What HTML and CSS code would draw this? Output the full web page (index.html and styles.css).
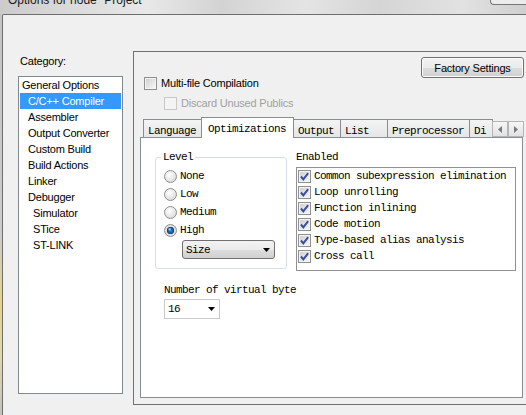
FILE: index.html
```html
<!DOCTYPE html>
<html>
<head>
<meta charset="utf-8">
<title>Options for node "Project"</title>
<link rel="stylesheet" href="styles.css">
</head>
<body>
<div class="app">
  <div class="titlebar">
    <span class="title">Options for node "Project"</span>
    <span class="caption-btn"></span>
  </div>
  <div class="frame">
    <div class="frame-edge"></div>
    <div class="window">
      <div class="main">
        <aside class="sidebar">
          <div class="cat-label">Category:</div>
          <ul class="listbox">
            <li>General Options</li>
            <li class="l1 selected">C/C++ Compiler</li>
            <li class="l1">Assembler</li>
            <li class="l1">Output Converter</li>
            <li class="l1">Custom Build</li>
            <li class="l1">Build Actions</li>
            <li class="l1">Linker</li>
            <li class="l1">Debugger</li>
            <li class="l2">Simulator</li>
            <li class="l2">STice</li>
            <li class="l2">ST-LINK</li>
          </ul>
        </aside>
        <section class="panel">
          <div class="panel-top">
            <div class="checks">
              <div class="check-row"><span class="cb"></span><span>Multi-file Compilation</span></div>
              <div class="check-row sub disabled"><span class="cb"></span><span>Discard Unused Publics</span></div>
            </div>
            <button class="factory">Factory Settings</button>
          </div>
          <div class="tabs mono">
            <div class="tabstrip">
              <div class="tab">Language</div>
              <div class="tab active">Optimizations</div>
              <div class="tab">Output</div>
              <div class="tab">List</div>
              <div class="tab">Preprocessor</div>
              <div class="tab tab-clip">Di</div>
              <div class="tab-scroll">
                <span class="scroll-btn"><svg width="4" height="7" viewBox="0 0 4 7"><path d="M4 0V7L0 3.5Z" fill="#7a7a7a"/></svg></span>
                <span class="scroll-btn"><svg width="4" height="7" viewBox="0 0 4 7"><path d="M0 0V7L4 3.5Z" fill="#7a7a7a"/></svg></span>
              </div>
            </div>
            <div class="page">
              <div class="page-row">
                <fieldset class="level">
                  <legend>Level</legend>
                  <div class="radio-row"><span class="radio"></span><span>None</span></div>
                  <div class="radio-row"><span class="radio"></span><span>Low</span></div>
                  <div class="radio-row"><span class="radio"></span><span>Medium</span></div>
                  <div class="radio-row"><span class="radio on"></span><span>High</span></div>
                  <div class="combo combo-size"><span>Size</span><svg width="7" height="4" viewBox="0 0 7 4"><path d="M0 0H7L3.5 4Z" fill="#000"/></svg></div>
                </fieldset>
                <div class="enabled">
                  <div class="enabled-label">Enabled</div>
                  <div class="checklist">
                    <div class="check-item"><span class="cb"><svg width="11" height="11" viewBox="0 0 11 11"><path d="M2 5.5L4.3 8.3L9.2 2.2" fill="none" stroke="#3a4f9c" stroke-width="2"/></svg></span><span>Common subexpression elimination</span></div>
                    <div class="check-item"><span class="cb"><svg width="11" height="11" viewBox="0 0 11 11"><path d="M2 5.5L4.3 8.3L9.2 2.2" fill="none" stroke="#3a4f9c" stroke-width="2"/></svg></span><span>Loop unrolling</span></div>
                    <div class="check-item"><span class="cb"><svg width="11" height="11" viewBox="0 0 11 11"><path d="M2 5.5L4.3 8.3L9.2 2.2" fill="none" stroke="#3a4f9c" stroke-width="2"/></svg></span><span>Function inlining</span></div>
                    <div class="check-item"><span class="cb"><svg width="11" height="11" viewBox="0 0 11 11"><path d="M2 5.5L4.3 8.3L9.2 2.2" fill="none" stroke="#3a4f9c" stroke-width="2"/></svg></span><span>Code motion</span></div>
                    <div class="check-item"><span class="cb"><svg width="11" height="11" viewBox="0 0 11 11"><path d="M2 5.5L4.3 8.3L9.2 2.2" fill="none" stroke="#3a4f9c" stroke-width="2"/></svg></span><span>Type-based alias analysis</span></div>
                    <div class="check-item"><span class="cb"><svg width="11" height="11" viewBox="0 0 11 11"><path d="M2 5.5L4.3 8.3L9.2 2.2" fill="none" stroke="#3a4f9c" stroke-width="2"/></svg></span><span>Cross call</span></div>
                  </div>
                </div>
              </div>
              <div class="number">
                <div class="number-label">Number of virtual byte</div>
                <div class="combo combo-num"><span>16</span><svg width="7" height="4" viewBox="0 0 7 4"><path d="M0 0H7L3.5 4Z" fill="#000"/></svg></div>
              </div>
            </div>
          </div>
        </section>
      </div>
    </div>
  </div>
</div>
</body>
</html>
```
FILE: styles.css
```css
* { box-sizing: border-box; }
html, body { margin: 0; padding: 0; }
body {
  width: 526px;
  height: 415px;
  overflow: hidden;
  background: #f0f0f0;
  font-family: "Liberation Sans", Arial, sans-serif;
  font-size: 11px;
  letter-spacing: -0.2px;
  color: #000;
}
.app { display: flex; flex-direction: column; height: 415px; }

.titlebar {
  height: 14px;
  flex-shrink: 0;
  display: flex;
  justify-content: space-between;
  align-items: flex-start;
  overflow: hidden;
  background: linear-gradient(90deg, #cbcbcb 0%, #d9d9d9 12%, #e8e8e8 28%, #d3d3d3 42%, #e4e4e4 58%, #d5d5d5 72%, #e2e2e2 88%, #cfcfcf 100%);
}
.title {
  margin: -6px 0 0 8px;
  font-size: 12px;
  line-height: 12px;
  letter-spacing: 0;
  color: #1b1b1b;
  white-space: nowrap;
}
.caption-btn {
  width: 36px;
  height: 5px;
  border-left: 1px solid #767676;
  border-bottom: 1px solid #767676;
  border-bottom-left-radius: 4px;
  background: #ececec;
}

.frame { flex: 1; display: flex; min-height: 0; }
.frame-edge {
  width: 2px;
  background: linear-gradient(#c4c4c4 0%, #cccccc 55%, #e6d38c 72%, #e0d8aa 85%, #c2c2c2 100%);
}
.window {
  flex: 1;
  border-top: 1px solid #6e6e6e;
  border-left: 1px solid #6e6e6e;
  border-top-left-radius: 2px;
  background: #f0f0f0;
}
.main { display: flex; padding-top: 36px; }

/* Sidebar */
.sidebar { margin-left: 15px; width: 105px; flex-shrink: 0; }
.cat-label { margin: 2px 0 0 2px; line-height: 16px; }
.listbox {
  list-style: none;
  margin: 7px 0 0 0;
  padding: 0;
  height: 318px;
  border: 1px solid #828790;
  background: #fff;
}
.listbox li {
  height: 16px;
  line-height: 16px;
  margin: 0 1px;
  padding-left: 2px;
  white-space: nowrap;
}
.listbox li.l1 { padding-left: 8px; }
.listbox li.l2 { padding-left: 13px; }
.listbox li.selected { background: #3399ff; color: #fff; }

/* Panel */
.panel {
  margin-left: 10px;
  flex: 1;
  height: 354px;
  border: 1px solid #707070;
  border-right: none;
}
.panel-top {
  display: flex;
  justify-content: space-between;
  align-items: flex-start;
  padding: 5px 2px 0 10px;
}
.checks { margin-top: 20px; }
.check-row { display: flex; align-items: center; gap: 4px; height: 13px; line-height: 13px; white-space: nowrap; }
.check-row.sub { margin-top: 7px; padding-left: 20px; }
.check-row.disabled { color: #a0a0a0; }

.cb {
  width: 13px;
  height: 13px;
  flex-shrink: 0;
  display: flex;
  align-items: center;
  justify-content: center;
  border: 1px solid #8e8f8f;
  background: linear-gradient(135deg, #cdcdcd, #fafafa);
  box-shadow: inset 0 0 0 1px #f4f4f4;
}
.check-row.disabled .cb {
  border-color: #c8c8c8;
  background: #f4f4f4;
  box-shadow: none;
}
.factory {
  width: 103px;
  height: 21px;
  margin: 0;
  padding: 0;
  font-family: "Liberation Sans", Arial, sans-serif;
  font-size: 11px;
  letter-spacing: -0.2px;
  color: #000;
  border: 1px solid #707070;
  border-radius: 3px;
  background: linear-gradient(#f2f2f2 0%, #ebebeb 50%, #dddddd 51%, #d0d0d0 100%);
  box-shadow: inset 0 0 0 1px #fbfbfb;
}

/* Tabs */
.mono {
  font-family: "Liberation Mono", "Courier New", monospace;
  font-size: 11px;
  letter-spacing: -0.6px;
}
.tabs { margin: 7px 0 0 6px; width: 383px; }
.tabstrip {
  display: flex;
  align-items: flex-end;
  height: 20px;
  padding-left: 3px;
  position: relative;
  z-index: 1;
}
.tab {
  height: 18px;
  min-width: 48px;
  padding: 5px 5px 0 4px;
  margin-right: -1px;
  line-height: 13px;
  white-space: nowrap;
  border: 1px solid #898c95;
  border-bottom: none;
  background: linear-gradient(#f4f4f4, #e6e6e6);
}
.tab.active {
  height: 21px;
  margin-bottom: -1px;
  padding: 5px 7px 0 6px;
  background: #fff;
  position: relative;
  z-index: 2;
}
.tab.tab-clip { flex: 1; min-width: 0; overflow: hidden; }
.tab-scroll { display: flex; margin-right: -1px; }
.scroll-btn {
  width: 16px;
  height: 16px;
  display: flex;
  align-items: center;
  justify-content: center;
  border: 1px solid #b5b5b5;
  background: linear-gradient(#f6f6f6, #e2e2e2);
}
.page {
  height: 261px;
  border: 1px solid #898c95;
  background: #fff;
  padding: 12px 0 0 14px;
}
.page-row { display: flex; align-items: flex-start; }

fieldset.level {
  margin: 0;
  width: 132px;
  border: 1px solid #d5dfe5;
  border-radius: 3px;
  padding: 3px 0 9px 8px;
}
fieldset.level legend {
  margin-left: -3px;
  padding: 0 2px;
  line-height: 14px;
}
.radio-row { display: flex; align-items: center; gap: 3px; height: 18px; line-height: 18px; }
.radio {
  width: 13px;
  height: 13px;
  flex-shrink: 0;
  border-radius: 50%;
  border: 1px solid #8e8f8f;
  background: radial-gradient(circle at 40% 35%, #ffffff 0, #ebebeb 45%, #cfcfcf 100%);
}
.radio.on {
  background:
    radial-gradient(circle at 42% 38%, #c6eeff 0, rgba(198, 238, 255, 0) 1.8px),
    radial-gradient(circle at 50% 50%, #2f8ad0 0, #1b5f9e 2.4px, #0e3c6e 3.4px, #e2e2e2 4px, #d0d0d0 100%);
}
.combo {
  display: flex;
  align-items: center;
  justify-content: space-between;
  white-space: nowrap;
}
.combo-size {
  margin: 1px 0 0 18px;
  width: 93px;
  height: 19px;
  padding: 0 4px 0 3px;
  border: 1px solid #707070;
  border-radius: 3px;
  background: linear-gradient(#f2f2f2 0%, #ebebeb 50%, #dddddd 51%, #d0d0d0 100%);
}

.enabled { margin-left: 9px; width: 220px; }
.enabled-label { line-height: 14px; }
.checklist {
  margin-top: 3px;
  height: 104px;
  border: 1px solid #8f9196;
  background: #fff;
}
.check-item {
  display: flex;
  align-items: center;
  gap: 3px;
  height: 16px;
  line-height: 16px;
  padding-left: 1px;
  white-space: nowrap;
}

.number { margin: 12px 0 0 9px; }
.number-label { line-height: 14px; }
.combo-num {
  margin-top: 2px;
  width: 56px;
  height: 20px;
  padding: 0 4px 0 3px;
  border: 1px solid #cbcbcb;
  background: #fff;
}
```
